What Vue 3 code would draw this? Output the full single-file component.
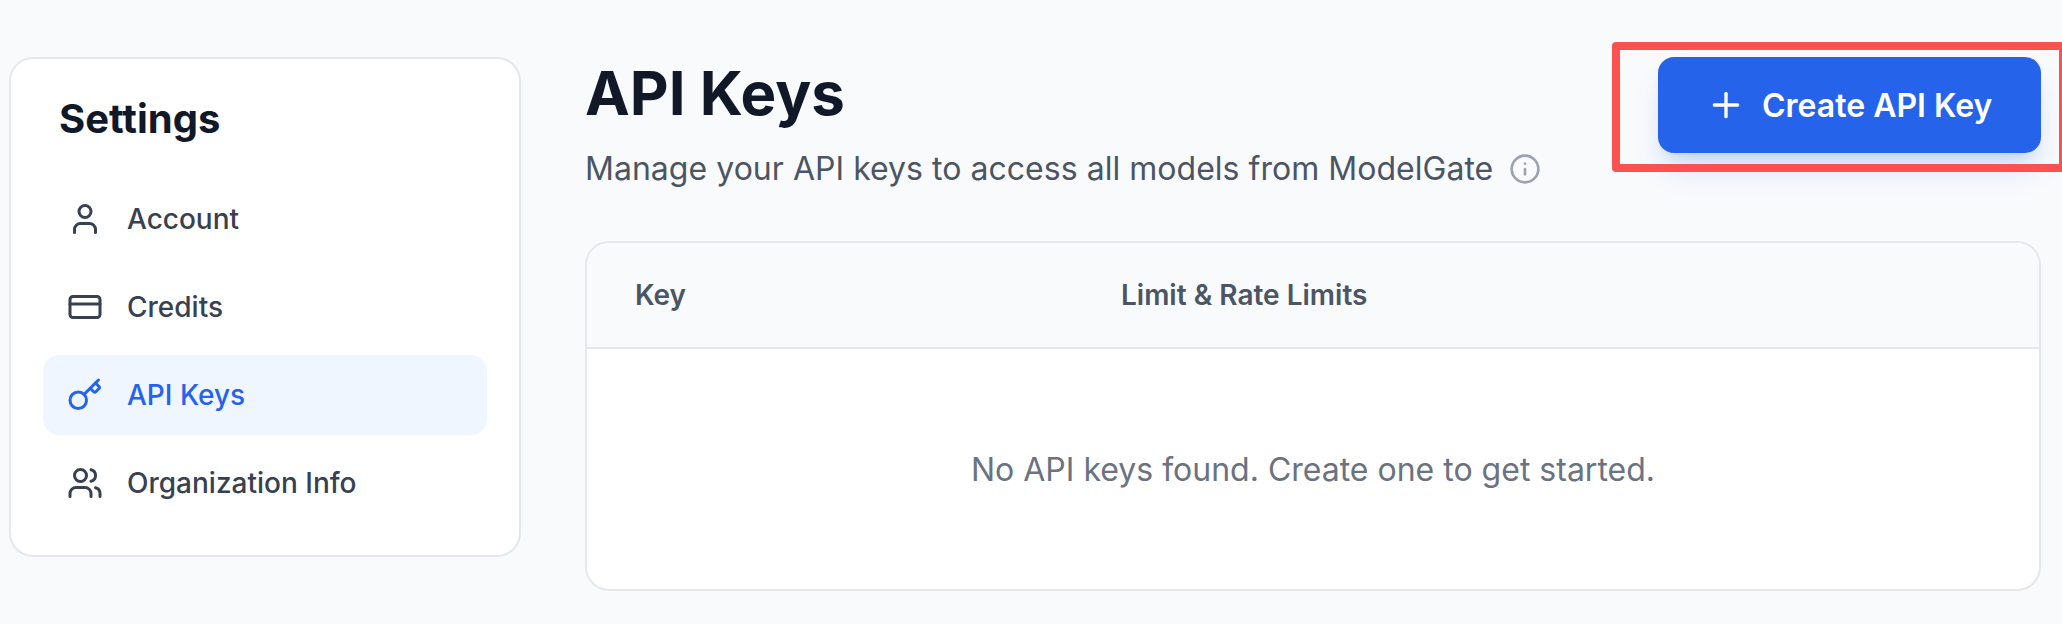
<script setup>
import { ref } from 'vue'

const activeMenu = ref('api-keys')

const menuItems = [
  { id: 'account', label: 'Account' },
  { id: 'credits', label: 'Credits' },
  { id: 'api-keys', label: 'API Keys' },
  { id: 'organization', label: 'Organization Info' }
]

const keys = ref([])

const selectMenu = (id) => {
  activeMenu.value = id
}
</script>

<template>
  <div class="page">
    <!-- Sidebar -->
    <aside class="sidebar">
      <h2 class="sidebar-title">Settings</h2>
      <nav class="menu">
        <button
          v-for="item in menuItems"
          :key="item.id"
          class="menu-item"
          :class="{ active: activeMenu === item.id }"
          @click="selectMenu(item.id)"
        >
          <svg class="icon menu-icon" viewBox="0 0 24 24">
            <template v-if="item.id === 'account'">
              <path d="M19 21v-2a4 4 0 0 0-4-4H9a4 4 0 0 0-4 4v2" />
              <circle cx="12" cy="7" r="4" />
            </template>
            <template v-else-if="item.id === 'credits'">
              <rect x="2" y="5" width="20" height="14" rx="2" />
              <path d="M2 10h20" />
            </template>
            <template v-else-if="item.id === 'api-keys'">
              <path d="m15.5 7.5 2.3 2.3a1 1 0 0 0 1.4 0l2.1-2.1a1 1 0 0 0 0-1.4L19 4" />
              <path d="m21 2-9.6 9.6" />
              <circle cx="7.5" cy="15.5" r="5.5" />
            </template>
            <template v-else>
              <path d="M16 21v-2a4 4 0 0 0-4-4H6a4 4 0 0 0-4 4v2" />
              <circle cx="9" cy="7" r="4" />
              <path d="M22 21v-2a4 4 0 0 0-3-3.87" />
              <path d="M16 3.13a4 4 0 0 1 0 7.75" />
            </template>
          </svg>
          <span>{{ item.label }}</span>
        </button>
      </nav>
    </aside>

    <!-- Main -->
    <main class="main">
      <header class="page-header">
        <div>
          <h1 class="page-title">API Keys</h1>
          <p class="page-desc">
            <span class="desc-text">Manage your API keys to access all models from ModelGate</span>
            <svg class="icon info-icon" viewBox="0 0 24 24">
              <circle cx="12" cy="12" r="10" />
              <path d="M12 16v-4" />
              <path d="M12 8h.01" />
            </svg>
          </p>
        </div>
        <div class="create-wrap">
          <button class="btn-create">
            <svg class="icon plus-icon" viewBox="0 0 24 24">
              <path d="M5 12h14" />
              <path d="M12 5v14" />
            </svg>
            <span>Create API Key</span>
          </button>
          <div class="highlight"></div>
        </div>
      </header>

      <section class="table">
        <div class="table-head">
          <span>Key</span>
          <span>Limit &amp; Rate Limits</span>
        </div>
        <div v-if="keys.length === 0" class="table-empty">
          <span>No API keys found. Create one to get started.</span>
        </div>
      </section>
    </main>
  </div>
</template>

<style>
body {
  margin: 0;
  background: #f9fafc;
}
</style>

<style scoped>
.page {
  display: flex;
  align-items: flex-start;
  gap: 64px;
  box-sizing: border-box;
  height: 624px;
  padding: 57px 21px 0 9px;
  overflow: hidden;
  background: #f9fafc;
  font-family: Inter, 'Liberation Sans', sans-serif;
}

.icon {
  flex-shrink: 0;
  fill: none;
  stroke: currentColor;
  stroke-width: 2;
  stroke-linecap: round;
  stroke-linejoin: round;
}

/* Sidebar */
.sidebar {
  box-sizing: border-box;
  flex: 0 0 512px;
  padding: 32px;
  background: #fff;
  border: 2px solid #e5e7eb;
  border-radius: 24px;
}

.sidebar-title {
  margin: 0 0 32px;
  padding: 0 16px;
  font-size: 40px;
  font-weight: 700;
  line-height: 56px;
  color: #111827;
}

.menu {
  display: flex;
  flex-direction: column;
  gap: 8px;
}

.menu-item {
  display: flex;
  align-items: center;
  gap: 24px;
  height: 80px;
  padding: 0 24px;
  background: none;
  border: none;
  border-radius: 16px;
  font-family: inherit;
  font-size: 28px;
  font-weight: 500;
  line-height: 40px;
  color: #374151;
  cursor: pointer;
}

.menu-item.active {
  background: #eff6ff;
  color: #2563eb;
}

.menu-icon {
  width: 36px;
  height: 36px;
}

/* Main */
.main {
  flex: 1;
  min-width: 0;
}

.page-header {
  display: flex;
  justify-content: space-between;
  align-items: flex-start;
  margin-bottom: 48px;
}

.page-title {
  margin: 0 0 16px;
  font-size: 60px;
  font-weight: 700;
  line-height: 72px;
  color: #111827;
}

.page-desc {
  display: flex;
  align-items: center;
  gap: 16px;
  margin: 0;
  font-size: 32px;
  line-height: 48px;
  letter-spacing: 0.03px;
  color: #4b5563;
}

.info-icon {
  width: 32px;
  height: 32px;
  color: #9ca3af;
}

.create-wrap {
  position: relative;
}

.btn-create {
  display: flex;
  align-items: center;
  gap: 16px;
  box-sizing: border-box;
  width: 383px;
  height: 96px;
  padding: 0 0 0 48px;
  background: #2563eb;
  border: none;
  border-radius: 16px;
  box-shadow: 0 20px 30px -6px rgba(37, 99, 235, 0.2), 0 8px 12px -8px rgba(37, 99, 235, 0.2);
  font-family: inherit;
  font-size: 32px;
  font-weight: 600;
  white-space: nowrap;
  color: #fff;
  cursor: pointer;
}

.plus-icon {
  width: 40px;
  height: 40px;
}

/* Frame drawn around the create button */
.highlight {
  position: absolute;
  top: -15px;
  right: -26px;
  bottom: -19px;
  left: -46px;
  border: 8px solid #fc5151;
  border-radius: 4px;
  pointer-events: none;
}

/* Table */
.table {
  box-sizing: border-box;
  height: 350px;
  overflow: hidden;
  background: #fff;
  border: 2px solid #e5e7eb;
  border-radius: 24px;
}

.table-head {
  display: grid;
  grid-template-columns: 486px 1fr;
  align-items: center;
  height: 104px;
  padding: 0 48px;
  background: #f9fafc;
  border-bottom: 2px solid #e5e7eb;
  font-size: 28px;
  font-weight: 600;
  color: #4b5563;
}

.table-empty {
  display: flex;
  align-items: center;
  justify-content: center;
  height: 240px;
  font-size: 32px;
  color: #6b7280;
}
</style>
